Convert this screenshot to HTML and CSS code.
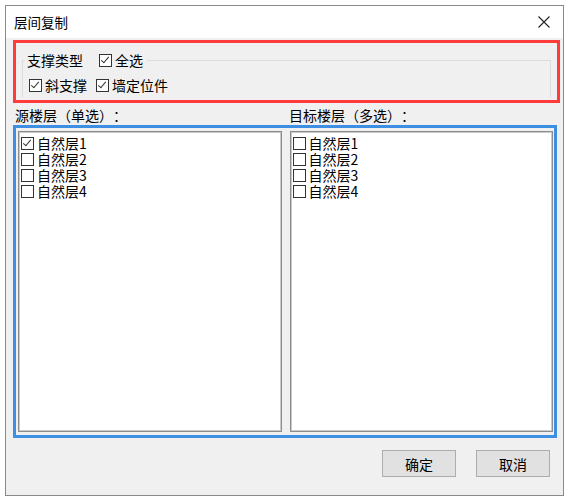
FILE: index.html
```html
<!DOCTYPE html>
<html lang="zh-CN">
<head>
    <meta charset="UTF-8">
    <title>层间复制</title>
    <link rel="stylesheet" href="styles.css">
</head>
<body>
    <div class="window">
        <div class="titlebar">
            <span class="title">层间复制</span>
            <span class="close">
                <svg width="12" height="12" viewBox="0 0 12 12"><path d="M0.5 0.5L11.5 11.5M11.5 0.5L0.5 11.5" stroke="#222" stroke-width="1.1" fill="none"/></svg>
            </span>
        </div>

        <div class="body">
            <!-- 支撑类型 -->
            <div class="red-box">
                <fieldset class="group">
                    <legend>
                        <span class="legend-text">支撑类型</span>
                        <label class="chk"><span class="box checked"></span>全选</label>
                    </legend>
                    <div class="group-row">
                        <label class="chk"><span class="box checked"></span>斜支撑</label>
                        <label class="chk"><span class="box checked"></span>墙定位件</label>
                    </div>
                </fieldset>
            </div>

            <div class="labels">
                <span>源楼层（单选）：</span>
                <span>目标楼层（多选）：</span>
            </div>

            <!-- 楼层列表 -->
            <div class="blue-box">
                <div class="listbox">
                    <label class="item"><span class="box checked"></span>自然层1</label>
                    <label class="item"><span class="box"></span>自然层2</label>
                    <label class="item"><span class="box"></span>自然层3</label>
                    <label class="item"><span class="box"></span>自然层4</label>
                </div>
                <div class="listbox">
                    <label class="item"><span class="box"></span>自然层1</label>
                    <label class="item"><span class="box"></span>自然层2</label>
                    <label class="item"><span class="box"></span>自然层3</label>
                    <label class="item"><span class="box"></span>自然层4</label>
                </div>
            </div>

            <div class="buttons">
                <button class="btn">确定</button>
                <button class="btn">取消</button>
            </div>
        </div>
    </div>
</body>
</html>
```

FILE: styles.css
```css
/* --- 基础 --- */
body {
    margin: 0;
    background: #ffffff;
    font-family: "Noto Sans CJK SC", "Noto Sans", sans-serif;
    font-size: 14px;
    color: #000;
}

.window {
    margin: 5px 0 0 5px;
    width: 557px;
    height: 489px;
    border: 1px solid #8a8a8a;
    background: #f0f0f0;
    display: flex;
    flex-direction: column;
}

/* --- 标题栏 --- */
.titlebar {
    height: 32px;
    background: #ffffff;
    display: flex;
    align-items: center;
    justify-content: space-between;
    padding: 0 13px 0 8px;
}

.title {
    font-size: 13.5px;
    color: #000;
}

.close {
    display: flex;
}

.close svg {
    display: block;
}

/* --- 主体 --- */
.body {
    flex: 1;
    padding: 2px 0 0 7px;
    display: flex;
    flex-direction: column;
}

.red-box {
    width: 541px;
    height: 57px;
    border: 3px solid #ff3b3b;
    flex: none;
}

.group {
    margin: 9px 6px 0 6px;
    padding: 0 0 0 6px;
    height: 44px;
    border: 1px solid #dcdcdc;
    border-bottom: none;
}

.group legend {
    padding: 0 4px 0 2px;
    margin-left: -4px;
    display: flex;
    align-items: center;
    line-height: 16px;
}

.legend-text {
    margin-right: 16px;
}

.group-row {
    display: flex;
    gap: 9px;
    margin-top: 9px;
    line-height: 16px;
}

.chk {
    display: flex;
    align-items: center;
}

/* 复选框 */
.box {
    width: 11px;
    height: 11px;
    border: 1px solid #333;
    background: #fff;
    margin-right: 3px;
    position: relative;
    flex: none;
}

.box.checked::after {
    content: "";
    position: absolute;
    left: 3px;
    top: 0px;
    width: 3px;
    height: 7px;
    border: solid #333;
    border-width: 0 1px 1px 0;
    transform: rotate(40deg);
}

.labels {
    display: flex;
    margin-top: 2px;
    height: 20px;
    align-items: center;
    padding-left: 2px;
    flex: none;
    text-spacing-trim: space-all;
}

.labels span:first-child {
    width: 274px;
}

/* --- 列表 --- */
.blue-box {
    width: 535px;
    height: 301px;
    border: 3px solid #3c8fe3;
    display: flex;
    gap: 8px;
    padding: 3px 1px 3px 2px;
    flex: none;
}

.listbox {
    flex: 1;
    background: #fff;
    border: 1px solid #8c8c8c;
    box-shadow: inset 0 0 0 1px #c9c9c9;
    padding: 3px 2px;
    display: flex;
    flex-direction: column;
}

.item {
    display: flex;
    align-items: center;
    height: 16px;
    line-height: 16px;
}

/* --- 按钮 --- */
.buttons {
    display: flex;
    justify-content: flex-end;
    gap: 20px;
    margin-top: 12px;
    padding-right: 13px;
}

.btn {
    width: 74px;
    height: 27px;
    background: #e1e1e1;
    border: 1px solid #adadad;
    font-family: inherit;
    font-size: 14px;
    color: #000;
    padding: 0;
}
```
